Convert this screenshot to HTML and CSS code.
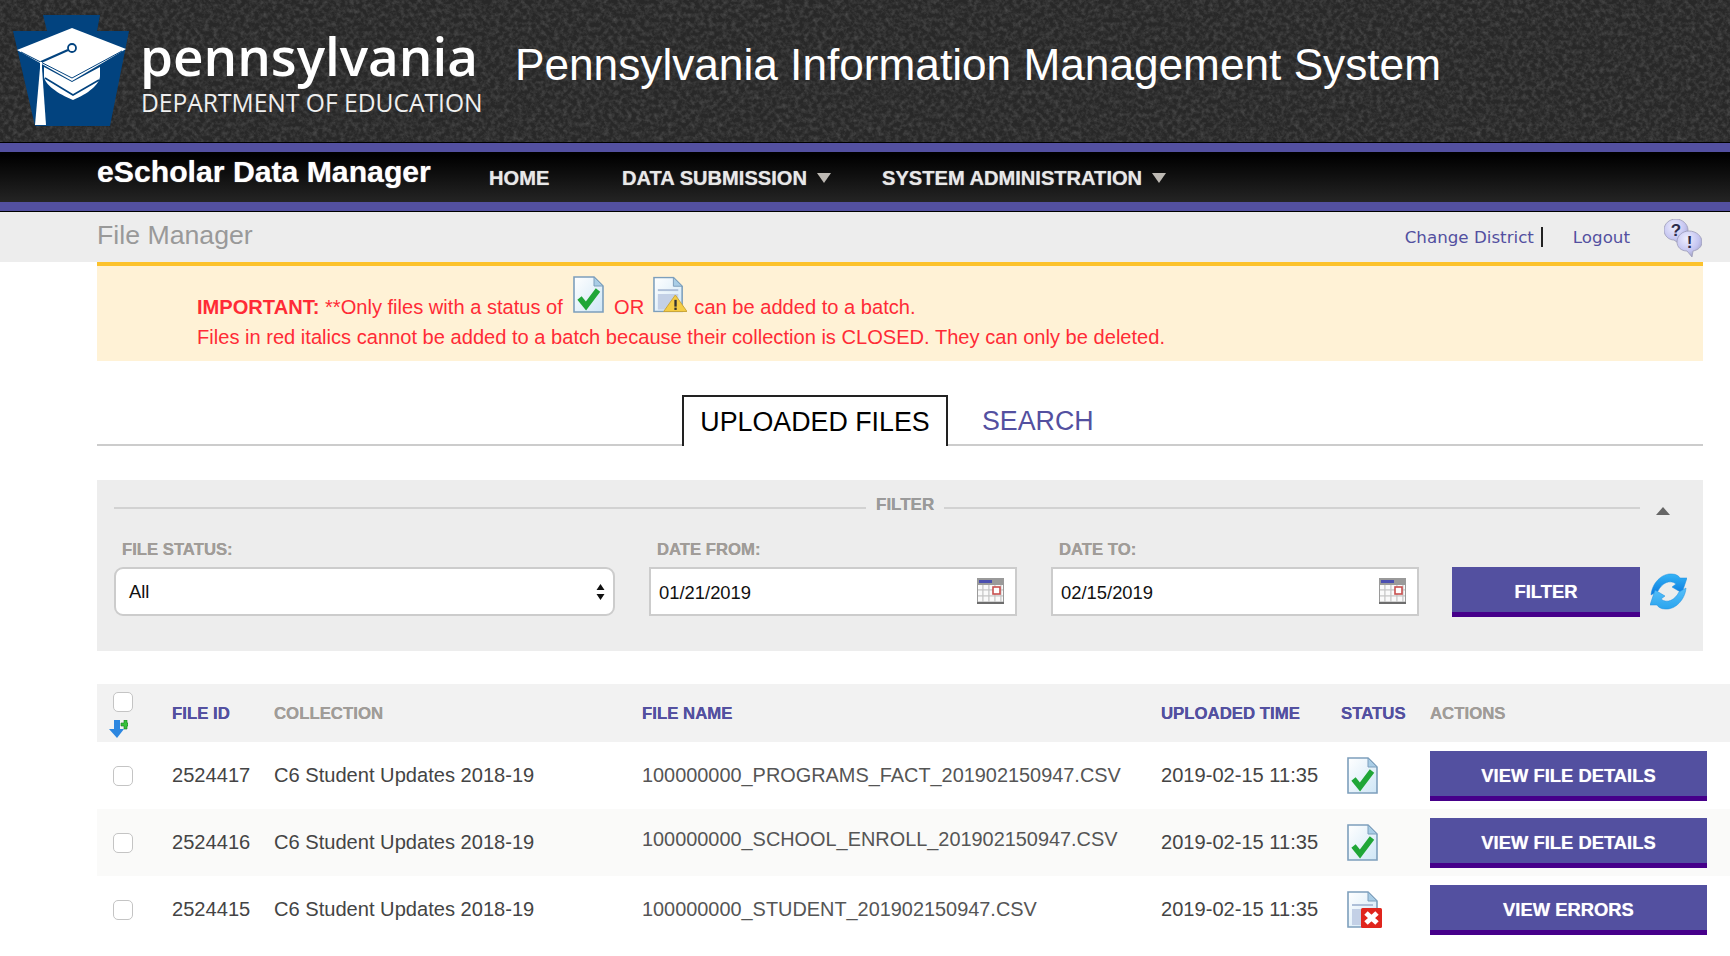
FILE: index.html
```
<!DOCTYPE html>
<html lang="en">
<head>
<meta charset="utf-8">
<title>File Manager</title>
<link rel="stylesheet" href="styles.css">
</head>
<body>
<svg class="defs" width="0" height="0" aria-hidden="true">
  <defs>
    <linearGradient id="pageFill" x1="0" y1="0" x2="1" y2="1"><stop offset="0" stop-color="#ffffff"/><stop offset="1" stop-color="#cfe6f6"/></linearGradient>
    <linearGradient id="refreshFill" x1="0" y1="0" x2="0" y2="1"><stop offset="0" stop-color="#35b4f6"/><stop offset="1" stop-color="#0a78de"/></linearGradient>
    <linearGradient id="refreshFillB" x1="0" y1="1" x2="0" y2="0"><stop offset="0" stop-color="#2aa4ee"/><stop offset="1" stop-color="#58c0fa"/></linearGradient>
    <radialGradient id="bubbleFill" cx=".4" cy=".3" r=".8"><stop offset="0" stop-color="#eeeeff"/><stop offset=".6" stop-color="#c4c4f0"/><stop offset="1" stop-color="#9494b4"/></radialGradient>
    <symbol id="page" viewBox="0 0 31 37">
      <path d="M1 1H21L30 10V36H1Z" fill="url(#pageFill)" stroke="#7d9fbc" stroke-width="1.6"/>
      <path d="M21 1V10H30Z" fill="#a9cde6" stroke="#7d9fbc"/>
    </symbol>
    <symbol id="check" viewBox="0 0 31 37">
      <path d="M6.500 22L13 30L25 14" fill="none" stroke="#1fa637" stroke-width="5.500"/>
    </symbol>
    <symbol id="lines" viewBox="0 0 31 37">
      <rect x="5" y="13" width="21" height="2" fill="#aebfd8"/>
      <rect x="5" y="18" width="21" height="16" fill="#c3d0e6"/>
    </symbol>
  </defs>
</svg>

<header class="masthead">
  <svg class="chalk" width="1730" height="143" aria-hidden="true">
    <filter id="grain"><feTurbulence type="fractalNoise" baseFrequency=".22" numOctaves="4" seed="7"/><feColorMatrix values="0 0 0 0 1  0 0 0 0 1  0 0 0 0 1  .3 0 0 0 -.115"/></filter>
    <rect width="1730" height="143" filter="url(#grain)"/>
  </svg>
  <svg class="keystone" viewBox="13 15 117 112" width="117" height="112" aria-hidden="true">
    <path d="M43 15H100L97 31H129L110 126H35L13 31H47Z" fill="#02437f"/>
    <path d="M44 67L72 82L100 67V76C100 84 88 94 73 100C58 94 44 84 44 76Z" fill="#fff"/>
    <path d="M45 78L73 95L99 80" fill="none" stroke="#02437f" stroke-width="1.600"/>
    <path d="M72 28L126 49L72 81L17 50Z" fill="#fff"/>
    <path d="M21 52L72 78L122 51" fill="none" stroke="#02437f" stroke-width="1"/>
    <path d="M41 62L68 50" stroke="#02437f" stroke-width="2.200"/>
    <circle cx="72" cy="48" r="4" fill="#fff" stroke="#02437f" stroke-width="1.800"/>
    <path d="M41 62V68" stroke="#fff" stroke-width="2"/>
    <path d="M40 68H42L46 125H35Z" fill="#fff"/>
  </svg>
  <div class="brand">
    <div class="brand-state">pennsylvania</div>
    <div class="brand-dept">DEPARTMENT OF EDUCATION</div>
  </div>
  <h1 class="system-title">Pennsylvania Information Management System</h1>
</header>

<nav class="navbar">
  <div class="nav-product">eScholar Data Manager</div>
  <a class="nav-item nav-home">HOME</a>
  <a class="nav-item nav-data">DATA SUBMISSION<span class="nav-caret"></span></a>
  <a class="nav-item nav-admin">SYSTEM ADMINISTRATION<span class="nav-caret"></span></a>
</nav>

<div class="subbar">
  <div class="page-title">File Manager</div>
  <div class="user-links">
    <a class="user-link link-sep">Change District</a>
    <a class="user-link">Logout</a>
    <svg class="help-icon" viewBox="0 0 38 38" width="38" height="38" aria-hidden="true">
      <path d="M12 0C5 0 0 5 0 11C0 17 5 21 10 21L17 26L15 21C20 20 24 17 24 11C24 5 18 0 12 0Z" fill="url(#bubbleFill)" stroke="#9c9cb8" stroke-width=".8"/>
      <text x="12" y="17" class="help-mark">?</text>
      <path d="M25 12C18 12 13 17 13 23C13 28 17 32 23 32L28 38L29 32C34 31 38 28 38 23C38 17 32 12 25 12Z" fill="url(#bubbleFill)" stroke="#9c9cb8" stroke-width=".8"/>
      <text x="25.500" y="29" class="help-mark">!</text>
    </svg>
  </div>
</div>

<main class="content">
  <section class="notice">
    <div class="notice-line"><strong>IMPORTANT:</strong> **Only files with a status of <svg class="notice-icon" width="31" height="37" aria-hidden="true"><use href="#page"/><use href="#check"/></svg> OR <svg class="notice-icon notice-warn" width="34" height="37" viewBox="0 0 35 37" aria-hidden="true"><use href="#page" width="31" height="37"/><use href="#lines" width="31" height="37"/><path d="M23 19L35 36H11Z" fill="#f5cd45" stroke="#c9a53a"/><rect x="22" y="24" width="2.400" height="7" fill="#333"/><rect x="22" y="32" width="2.400" height="2.400" fill="#333"/></svg> can be added to a batch.</div>
    <div class="notice-line">Files in red italics cannot be added to a batch because their collection is CLOSED. They can only be deleted.</div>
  </section>

  <div class="tabs">
    <a class="tab tab-active">UPLOADED FILES</a>
    <a class="tab tab-link">SEARCH</a>
  </div>

  <section class="filter">
    <div class="filter-legend">
      <span class="legend-line legend-line-left"></span>
      <span class="legend-text">FILTER</span>
      <span class="legend-line"></span>
      <span class="legend-toggle"></span>
    </div>
    <div class="filter-row">
      <div class="field field-status">
        <div class="field-label">FILE STATUS:</div>
        <div class="select-box"><span>All</span>
          <svg class="select-arrows" width="9" height="16" viewBox="0 0 9 16" aria-hidden="true"><path d="M4.500 0L8.500 6H.5ZM.5 10H8.500L4.500 16Z" fill="#111"/></svg>
        </div>
      </div>
      <div class="field field-date">
        <div class="field-label">DATE FROM:</div>
        <div class="date-box"><span>01/21/2019</span>
          <svg class="calendar" width="27" height="26" aria-hidden="true"><use href="#cal"/></svg>
        </div>
      </div>
      <div class="field field-date">
        <div class="field-label">DATE TO:</div>
        <div class="date-box"><span>02/15/2019</span>
          <svg class="calendar" width="27" height="26" aria-hidden="true"><use href="#cal"/></svg>
        </div>
      </div>
      <a class="btn btn-filter">FILTER</a>
      <svg class="refresh" viewBox="0 0 37 37" width="37" height="37" aria-hidden="true">
        <path d="M1 22C2 10 12 0 22 1C26 1 29 3 30 5L37 5L32 20L22 14L26 11C20 6 12 10 8 18Z" fill="url(#refreshFill)" stroke="#1c8fe0" stroke-width=".5"/>
        <path d="M36 15C35 27 25 37 15 36C11 36 8 34 7 32L0 32L5 17L15 23L11 26C17 31 25 27 29 19Z" fill="url(#refreshFillB)" stroke="#1c8fe0" stroke-width=".5"/>
      </svg>
    </div>
  </section>

  <table class="files">
    <colgroup>
      <col class="col-check"><col class="col-id"><col class="col-collection"><col class="col-name"><col class="col-time"><col class="col-status"><col class="col-actions">
    </colgroup>
    <thead>
      <tr>
        <th class="cell-check">
          <span class="checkbox"></span>
          <svg class="add-all" width="19" height="18" viewBox="0 0 19 18" aria-hidden="true">
            <path d="M5 0H11V9H15L8 18L0 9H5Z" fill="#2d87e0"/>
            <path d="M12 3H15V0H18V3H19V6H18V9H15V6H12Z" fill="#37c13a" stroke="#157a1e" stroke-width=".6"/>
          </svg>
        </th>
        <th class="sortable">FILE ID</th>
        <th>COLLECTION</th>
        <th class="sortable">FILE NAME</th>
        <th class="sortable">UPLOADED TIME</th>
        <th class="sortable">STATUS</th>
        <th>ACTIONS</th>
      </tr>
    </thead>
    <tbody>
      <tr>
        <td class="cell-check"><span class="checkbox"></span></td>
        <td>2524417</td>
        <td>C6 Student Updates 2018-19</td>
        <td class="cell-name">100000000_PROGRAMS_FACT_201902150947.CSV</td>
        <td>2019-02-15 11:35</td>
        <td class="cell-status"><svg class="status-icon" width="31" height="37" aria-hidden="true"><use href="#page"/><use href="#check"/></svg></td>
        <td><a class="btn btn-row">VIEW FILE DETAILS</a></td>
      </tr>
      <tr class="row-alt">
        <td class="cell-check"><span class="checkbox"></span></td>
        <td>2524416</td>
        <td>C6 Student Updates 2018-19</td>
        <td class="cell-name cell-raised">100000000_SCHOOL_ENROLL_201902150947.CSV</td>
        <td>2019-02-15 11:35</td>
        <td class="cell-status"><svg class="status-icon" width="31" height="37" aria-hidden="true"><use href="#page"/><use href="#check"/></svg></td>
        <td><a class="btn btn-row">VIEW FILE DETAILS</a></td>
      </tr>
      <tr>
        <td class="cell-check"><span class="checkbox"></span></td>
        <td>2524415</td>
        <td>C6 Student Updates 2018-19</td>
        <td class="cell-name">100000000_STUDENT_201902150947.CSV</td>
        <td>2019-02-15 11:35</td>
        <td class="cell-status"><svg class="status-icon" width="35" height="37" viewBox="0 0 35 37" aria-hidden="true"><use href="#page" width="31" height="37"/><use href="#lines" width="31" height="37"/><rect x="14" y="17" width="21" height="20" rx="1.500" fill="#e0251d"/><path d="M19 22L30 32M30 22L19 32" stroke="#fff" stroke-width="5"/></svg></td>
        <td><a class="btn btn-row">VIEW ERRORS</a></td>
      </tr>
    </tbody>
  </table>
</main>

<svg class="defs" width="0" height="0" aria-hidden="true">
  <defs>
    <pattern id="calGrid" width="6" height="6" patternUnits="userSpaceOnUse"><rect width="6" height="6" fill="#c4c4c4"/><rect x=".5" y=".5" width="4.800" height="4.800" fill="#fafafa"/></pattern>
    <symbol id="cal" viewBox="0 0 27 26">
      <rect width="27" height="26" fill="#9a9a9a"/>
      <rect x="2" y="2" width="13" height="3" fill="#4b4fb0"/>
      <rect x="1" y="7" width="25" height="17" fill="url(#calGrid)"/>
      <rect x="16" y="9" width="7" height="7" fill="#fff" stroke="#c9504f" stroke-width="1.600"/>
      <rect y="24" width="27" height="2" fill="#6d6d6d"/>
    </symbol>
  </defs>
</svg>
</body>
</html>
```
FILE: styles.css
```
* { box-sizing: border-box; }
html, body { margin: 0; padding: 0; }
body {
  width: 1730px;
  height: 956px;
  overflow: hidden;
  background: #fff;
  font-family: "Liberation Sans", Arial, sans-serif;
  color: #444;
}
.defs { position: absolute; }

.masthead {
  position: relative;
  height: 142px;
  display: flex;
  align-items: flex-start;
  padding-left: 13px;
  background: #282828;
  overflow: hidden;
}
.chalk { position: absolute; left: 0; top: 0; }
.keystone { position: relative; margin-top: 15px; flex: none; }
.brand { position: relative; margin-left: 10px; color: #fff; flex: none; width: 375px; }
.brand-state {
  font-family: "Open Sans", sans-serif;
  font-weight: 600;
  font-size: 53px;
  line-height: 60px;
  margin-top: 26px;
  white-space: nowrap;
}
.brand-dept {
  font-family: "Open Sans", sans-serif;
  font-size: 24.6px;
  line-height: 30px;
  margin-top: 2px;
  padding-left: 1px;
  color: #efefef;
  white-space: nowrap;
}
.system-title {
  position: relative;
  margin: 39px 0 0 0;
  font-weight: 400;
  font-size: 44.2px;
  line-height: 52px;
  color: #fff;
  white-space: nowrap;
}

.navbar {
  height: 70px;
  display: flex;
  align-items: flex-start;
  padding-left: 97px;
  border-top: 1px solid #000;
  border-bottom: 1px solid #000;
  background: linear-gradient(#000 12px, #252525 60px);
  box-shadow: inset 0 9px 0 #5350a0, inset 0 -9px 0 #5350a0;
  color: #e8e8e8;
}
.nav-product {
  margin-top: 11px;
  font-weight: 700;
  font-size: 30.2px;
  line-height: 36px;
  color: #fff;
  width: 392px;
  white-space: nowrap;
  text-shadow: 0 0 1px rgba(255, 255, 255, .7);
}
.nav-item {
  margin-top: 22px;
  font-weight: 700;
  font-size: 20.1px;
  line-height: 26px;
  white-space: nowrap;
  display: flex;
  align-items: center;
  text-shadow: 0 0 1px rgba(255, 255, 255, .6);
}
.nav-home { width: 133px; }
.nav-data { width: 259px; }
.nav-admin { margin-left: 1px; }
.nav-caret {
  width: 0;
  height: 0;
  margin-left: 10px;
  border-left: 7px solid transparent;
  border-right: 7px solid transparent;
  border-top: 10px solid #bdb9b3;
}

.subbar {
  height: 50px;
  display: flex;
  justify-content: space-between;
  align-items: center;
  padding-left: 97px;
  padding-right: 28px;
  background: #ededed;
}
.page-title { font-size: 26.7px; line-height: 30px; color: #999; margin-top: -4px; }
.user-links { display: flex; align-items: center; }
.user-link {
  font-family: "DejaVu Sans", Verdana, sans-serif;
  font-size: 16.7px;
  line-height: 20px;
  color: #5350a0;
}
.link-sep {
  padding-right: 7px;
  margin-right: 30px;
  border-right: 2px solid #222;
}
.help-icon { margin-left: 34px; margin-top: 2px; }
.help-mark {
  font-family: "Liberation Sans", Arial, sans-serif;
  font-size: 17px;
  font-weight: 700;
  text-anchor: middle;
  fill: #2c2c4c;
}

.content { padding-left: 97px; }
.notice {
  width: 1606px;
  height: 99px;
  padding: 26px 0 0 100px;
  border-top: 4px solid #fcc22c;
  background: #fff2d6;
  color: #ff2b36;
  font-size: 20.1px;
}
.notice-line { height: 30px; line-height: 30px; white-space: nowrap; }
.notice-icon { margin: -20px 4px -2px 5px; vertical-align: 3px; }
.notice-warn { margin-left: 3px; margin-right: 2px; }

.tabs {
  width: 1606px;
  height: 85px;
  display: flex;
  align-items: flex-end;
  padding-left: 585px;
  border-bottom: 2px solid #ccc;
}
.tab { white-space: nowrap; }
.tab-active {
  height: 51px;
  width: 266px;
  margin-bottom: -2px;
  padding-top: 7px;
  text-align: center;
  font-size: 26.8px;
  line-height: 36px;
  color: #000;
  background: #fff;
  border: 2px solid #222;
  border-bottom: 0;
}
.tab-link {
  margin-left: 34px;
  height: 50px;
  padding-top: 9px;
  font-size: 26.8px;
  line-height: 36px;
  color: #5350a0;
}

.filter {
  width: 1606px;
  height: 171px;
  margin-top: 34px;
  padding: 16px 16px 0 17px;
  background: #ededed;
}
.filter-legend { display: flex; align-items: center; height: 18px; margin-right: 47px; position: relative; }
.legend-line { flex: 1; height: 2px; background: #d2d2d2; margin-top: 6px; }
.legend-line-left { flex: none; width: 752px; }
.legend-text { padding: 0 10px; font-size: 17px; font-weight: 700; color: #9a9a9a; text-shadow: 0 0 .6px #9a9a9a; }
.legend-toggle {
  position: absolute;
  right: -30px;
  top: 11px;
  width: 0;
  height: 0;
  border-left: 7px solid transparent;
  border-right: 7px solid transparent;
  border-bottom: 8px solid #666;
}
.filter-row { display: flex; align-items: flex-end; margin-top: 26px; }
.field-label {
  padding-left: 8px;
  margin-bottom: 8px;
  font-size: 16.7px;
  line-height: 19px;
  font-weight: 700;
  color: #a09c98;
  text-shadow: 0 0 .6px #a09c98;
}
.field-status { width: 501px; margin-right: 34px; }
.field-date { width: 368px; margin-right: 34px; }
.field-date + .field-date { margin-right: 33px; }
.select-box, .date-box {
  height: 49px;
  display: flex;
  align-items: center;
  justify-content: space-between;
  background: #fff;
  color: #111;
  font-size: 18.4px;
  border: 2px solid #ccc;
}
.select-box { border-radius: 9px; padding: 0 8px 0 13px; }
.date-box { padding: 3px 11px 0 8px; }
.calendar { display: block; margin-top: -5px; }
.btn {
  display: flex;
  align-items: center;
  justify-content: center;
  padding-top: 5px;
  background: #5350a0;
  border-bottom: 5px solid #46008a;
  color: #fff;
  font-weight: 700;
  font-size: 18.4px;
  text-shadow: 0 0 .8px rgba(255, 255, 255, .7);
}
.btn-filter { width: 188px; height: 50px; margin-bottom: -1px; flex: none; }
.refresh { margin: 0 0 6px 10px; flex: none; }

.files {
  width: 1633px;
  margin-top: 33px;
  table-layout: fixed;
  border-collapse: collapse;
}
.col-check { width: 75px; }
.col-id { width: 102px; }
.col-collection { width: 368px; }
.col-name { width: 519px; }
.col-time { width: 180px; }
.col-status { width: 89px; }
.col-actions { width: 300px; }
.files th {
  height: 58px;
  padding: 0;
  text-align: left;
  background: #f2f2f2;
  font-size: 16.8px;
  font-weight: 700;
  color: #a09c98;
  text-shadow: 0 0 .6px #a09c98;
}
.files th:not(.cell-check) { padding-top: 2px; }
.files th.sortable { color: #5350a0; text-shadow: 0 0 .6px #5350a0; }
.files td {
  height: 67px;
  padding: 0;
  font-size: 20.1px;
  color: #444;
  white-space: nowrap;
}
.row-alt td { background: #fafaf9; }
.files td.cell-name { font-size: 19.9px; color: #555; }
.files td.cell-raised { padding-bottom: 6px; }
.cell-check { position: relative; }
.checkbox {
  display: block;
  width: 20px;
  height: 20px;
  margin-left: 16px;
  border: 1.5px solid #c4c4c4;
  border-radius: 5px;
  background: #fff;
}
th.cell-check .checkbox { margin-top: -4px; }
.add-all { display: block; margin: 8px 0 -8px 12px; }
.status-icon { display: block; margin: 0 0 0 6px; }
.btn-row { width: 277px; height: 50px; }
```
